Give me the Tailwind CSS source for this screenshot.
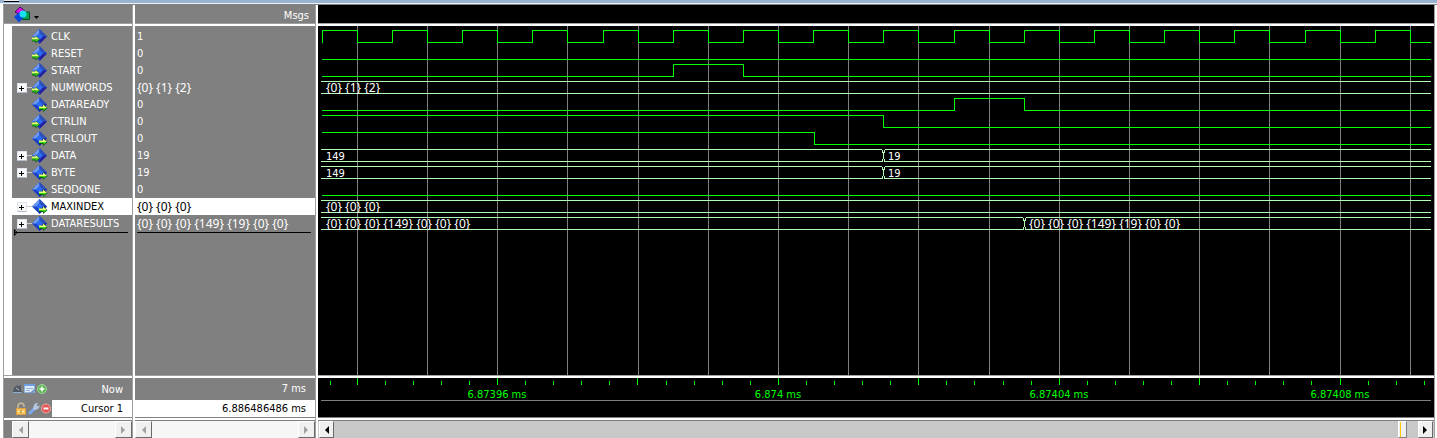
<!DOCTYPE html>
<html lang="en">
<head>
<meta charset="utf-8">
<title>Wave</title>
<script src="https://cdn.jsdelivr.net/npm/@tailwindcss/browser@4"></script>
</head>
<body class="h-screen flex flex-col overflow-hidden bg-white font-['DejaVu_Sans_Condensed','DejaVu_Sans',sans-serif] text-[11px] leading-[17px] text-white">

<svg class="hidden">
  <symbol id="in" viewBox="0 0 16 17">
    <path d="M7.500 1L15 8.500L7.500 16L0 8.500Z" fill="#1c3fc8"/><path d="M7.500 1L0 8.500L4 8.500L7.500 5Z" fill="#6f9cf5"/><path d="M7.500 1L15 8.500L11 8.500L7.500 5Z" fill="#2c50b8"/><path d="M15 8.500L7.500 16V12L11 8.500Z" fill="#2420a0"/><path d="M7.500 5L11 8.500L7.500 12L4 8.500Z" fill="#2a6cf6"/>
    <path d="M0 8.500V16H5L7.500 16Z" fill="#808080"/>
    <path d="M0 9.500H3.500V7.500L8 11.500L3.500 15.500V13.500H0Z" fill="#0a5a14"/><path d="M0 9.500H3.500V8L7.500 11.500H0Z" fill="#e4ff7c"/><path d="M0 11.500H7L4 14V12.500H0Z" fill="#3fdc10"/>
  </symbol>
  <symbol id="out" viewBox="0 0 16 17">
    <path d="M7.500 1L15 8.500L7.500 16L0 8.500Z" fill="#1c3fc8"/><path d="M7.500 1L0 8.500L4 8.500L7.500 5Z" fill="#6f9cf5"/><path d="M7.500 1L15 8.500L11 8.500L7.500 5Z" fill="#2c50b8"/><path d="M15 8.500L7.500 16V12L11 8.500Z" fill="#2420a0"/><path d="M7.500 5L11 8.500L7.500 12L4 8.500Z" fill="#2a6cf6"/>
    <path d="M7 10.500H11V8L15.500 12L11 16V14H7Z" fill="#0a5a14"/><path d="M7 10.500H11V8.500L15 12H7Z" fill="#e4ff7c"/><path d="M7 12H14.500L11.500 14.500V13H7Z" fill="#3fdc10"/>
  </symbol>
</svg>

<div class="h-[5px] shrink-0 flex flex-col">
  <div class="h-[3px] bg-[#99b4d1]"><div class="ml-1 w-[15px] h-[2px] bg-[#e8eef4] border-b border-black"></div></div>
  <div class="h-px bg-[#eef2f6]"></div>
  <div class="h-px ml-[3px] bg-[#808080]"></div>
</div>

<main class="flex-1 min-h-0 flex ml-[3px] border-l border-[#a0a0a0]">

  <!-- signal names -->
  <section class="w-[129px] shrink-0 flex flex-col bg-[#808080] border-r border-[#a0a0a0]" aria-label="Signals">
    <header class="h-[18px] shrink-0 pl-[9px]">
      <button class="flex items-center h-[18px]" aria-label="View options">
        <svg width="30" height="18" viewBox="0 0 30 18">
          <path d="M7 2L12 6L8 10L2 7Z" fill="#e010e8" stroke="#500060"/><path d="M9 7H16.500V14.500H9Z" fill="#08a050" stroke="#045028"/><path d="M6 7L11 12L6 17.500L1 12Z" fill="#0848e0"/><circle cx="10" cy="9" r="3.500" fill="#18e0f0"/><path d="M21 11H26L23.500 14Z" fill="#000"/>
        </svg>
      </button>
    </header>
    <div class="h-[3px] shrink-0 bg-white border-t border-[#a0a0a0]"></div>
    <div class="flex-1 min-h-0 border-l-8 border-white pt-[2px]">
      <ul id="names"></ul>
      <svg class="block -mt-[3px]" width="116" height="8"><path d="M2.500 .5V6.500L5 3.500Z" fill="none" stroke="#000"/><path d="M3 3.500H116" stroke="#000"/></svg>
    </div>
    <div class="h-[3px] shrink-0 bg-white border-t border-[#a0a0a0]"></div>
    <div class="h-[22px] shrink-0 flex items-center justify-between pl-2 pr-[9px]">
      <svg width="36" height="12" viewBox="0 0 36 12">
        <path d="M1 8L2.500 4L5 3L4 1.500L7 3L9 2V8L11 9V10H1Z" fill="#505a64"/><path d="M1 9.500H10" stroke="#8fb0d0"/><path d="M4 5L7 7" stroke="#aab4bd"/>
        <path d="M12.500 1.500H22.500V9.500H12.500Z" fill="#dcebfa" stroke="#8db2e0"/><path d="M12 1H23V3H12Z" fill="#6ca0e0"/><path d="M14 5.500H21M14 7.500H18" stroke="#9cb4d4"/><path d="M18 10L22 6L23 7L20 11Z" fill="#6c90c0"/>
        <circle cx="30" cy="6" r="4.500" fill="#5fb656" stroke="#a2d498"/><path d="M30 3.500V8.500M27.500 6H32.500" stroke="#fff" stroke-width="1.500"/>
      </svg>
      <span>Now</span>
    </div>
    <div class="h-[17px] shrink-0 flex">
      <svg class="ml-2 shrink-0" width="40" height="17" viewBox="0 0 40 17">
        <path d="M6 9V6A3 2.800 0 0 1 12 6V7" fill="none" stroke="#c8b89c" stroke-width="1.500"/><rect x="4.500" y="8.500" width="9" height="6" fill="#f7c860" stroke="#dca040"/><path d="M6 11.500H12" stroke="#fff0b0"/><path d="M9 10V13" stroke="#a07020"/>
        <path d="M18 13L23 8" stroke="#7caaf0" stroke-width="3" stroke-linecap="round"/><path d="M21 9L22 5L24 3L26 3L24.500 5L25.500 6.500L27.500 5L27 8L25 9.500L23 10Z" fill="#b4c8e4"/>
        <circle cx="34" cy="8.500" r="4.500" fill="#e45454" stroke="#f0a8a0"/><path d="M31.500 8.500H36.500" stroke="#fff" stroke-width="2"/>
      </svg>
      <div class="flex-1 bg-white text-black text-right pr-[9px] leading-[18px]">Cursor 1</div>
    </div>
    <div class="h-1 shrink-0 bg-white border-y border-[#808080]"></div>
    <div class="h-[17px] shrink-0 ml-2 flex justify-between bg-[#f6f6f6]">
      <button class="w-[17px] bg-[#f0f0f0] border border-t-white border-l-white border-r-[#696969] border-b-[#696969] flex items-center justify-center" aria-label="Scroll names left"><svg width="5" height="8"><path d="M5 0V8L1 4Z" fill="#a0a0a0"/></svg></button>
      <button class="w-[17px] bg-[#f0f0f0] border border-t-white border-l-white border-r-[#696969] border-b-[#696969] flex items-center justify-center" aria-label="Scroll names right"><svg width="5" height="8"><path d="M0 0V8L4 4Z" fill="#a0a0a0"/></svg></button>
    </div>
  </section>
  <div class="w-[2px] shrink-0 bg-white"></div>

  <!-- signal values -->
  <section class="w-[181px] shrink-0 flex flex-col bg-[#808080] border-r border-[#a0a0a0]" aria-label="Values">
    <header class="h-[18px] shrink-0 pt-[2px] pr-[6px] text-right">Msgs</header>
    <div class="h-[3px] shrink-0 bg-white border-t border-[#a0a0a0]"></div>
    <div class="flex-1 min-h-0 pt-[2px]">
      <ul id="values"></ul>
      <div class="ml-[2px] mr-1 h-px bg-black"></div>
    </div>
    <div class="h-[3px] shrink-0 bg-white border-t border-[#a0a0a0]"></div>
    <div class="h-[22px] shrink-0 leading-[22px] text-right pr-[9px]">7 ms</div>
    <div class="h-[17px] shrink-0 bg-white text-black text-right pr-[9px] leading-[18px]">6.886486486 ms</div>
    <div class="h-1 shrink-0 bg-white border-y border-[#808080]"></div>
    <div class="h-[17px] shrink-0 flex justify-between bg-[#f6f6f6]">
      <button class="w-[17px] bg-[#f0f0f0] border border-t-white border-l-white border-r-[#696969] border-b-[#696969] flex items-center justify-center" aria-label="Scroll values left"><svg width="5" height="8"><path d="M5 0V8L1 4Z" fill="#a0a0a0"/></svg></button>
      <button class="w-[17px] bg-[#f0f0f0] border border-t-white border-l-white border-r-[#696969] border-b-[#696969] flex items-center justify-center" aria-label="Scroll values right"><svg width="5" height="8"><path d="M0 0V8L4 4Z" fill="#a0a0a0"/></svg></button>
    </div>
  </section>
  <div class="w-[2px] shrink-0 bg-white"></div>

  <!-- waveforms -->
  <section class="flex-1 min-w-0 flex flex-col bg-black border-r border-[#a0a0a0]" aria-label="Waveforms">
    <div class="h-[18px] shrink-0"></div>
    <div class="h-[3px] shrink-0 bg-white border-t border-[#a0a0a0]"></div>
    <div class="flex-1 min-h-0 overflow-hidden"><svg id="wave" class="block w-full h-full" shape-rendering="crispEdges"></svg></div>
    <div class="h-[3px] shrink-0 bg-white border-t border-[#a0a0a0]"></div>
    <div class="h-[39px] shrink-0"><svg id="time" class="block w-full h-full" shape-rendering="crispEdges"></svg></div>
    <div class="h-1 shrink-0 bg-white border-y border-[#808080]"></div>
    <div class="h-[17px] shrink-0 flex bg-[#c8c8c8] pl-px pr-px">
      <button class="w-[15px] bg-[#f0f0f0] border border-t-white border-l-white border-r-[#696969] border-b-[#696969] flex items-center justify-center" aria-label="Scroll waves left"><svg width="5" height="8"><path d="M5 0V8L1 4Z" fill="#000"/></svg></button>
      <div class="flex-1"></div>
      <button class="w-[9px] mr-[11px] bg-[#f0f0f0] border border-t-white border-l-white border-r-[#808080] border-b-[#808080] flex pl-px" aria-label="Scroll position"><span class="w-px h-full bg-[#ffc800]"></span></button>
      <button class="w-[15px] bg-[#f0f0f0] border border-t-white border-l-white border-r-[#696969] border-b-[#696969] flex items-center justify-center" aria-label="Scroll waves right"><svg width="5" height="8"><path d="M0 0V8L4 4Z" fill="#000"/></svg></button>
    </div>
  </section>
  <div class="w-[2px] shrink-0 bg-white"></div>
</main>

<script>
// x positions are relative to the waveform pane
const clk = [];
for (let k = 0; k < 16; k++) { clk.push([Math.floor(4.3 + 70.2 * k), 1]); clk.push([Math.floor(39.2 + 70.2 * k), 0]); }
const signals = [
  { n: 'CLK', v: '1', io: 'in', w: clk },
  { n: 'RESET', v: '0', io: 'in', w: [[4, 0]] },
  { n: 'START', v: '0', io: 'in', w: [[4, 0], [355, 1], [425, 0]] },
  { n: 'NUMWORDS', v: '{0} {1} {2}', io: 'in', b: [[3, '{0} {1} {2}']] },
  { n: 'DATAREADY', v: '0', io: 'out', w: [[4, 0], [636, 1], [706, 0]] },
  { n: 'CTRLIN', v: '0', io: 'in', w: [[4, 1], [565, 0]] },
  { n: 'CTRLOUT', v: '0', io: 'out', w: [[4, 1], [496, 0]] },
  { n: 'DATA', v: '19', io: 'in', b: [[3, '149'], [565, '19']] },
  { n: 'BYTE', v: '19', io: 'out', b: [[3, '149'], [565, '19']] },
  { n: 'SEQDONE', v: '0', io: 'out', w: [[4, 0]] },
  { n: 'MAXINDEX', v: '{0} {0} {0}', io: 'out', b: [[3, '{0} {0} {0}']], sel: true },
  { n: 'DATARESULTS', v: '{0} {0} {0} {149} {19} {0} {0}', io: 'out', b: [[3, '{0} {0} {0} {149} {0} {0} {0}'], [706, '{0} {0} {0} {149} {19} {0} {0}']] }
];
const END = 1113;
const listFont = t => t.startsWith('{') ? "font-['Noto_Sans',sans-serif] text-[12px]" : '';
let names = '', values = '', g = '';
for (let k = 0; k < 16; k++) { const x = Math.floor(39.2 + 70.2 * k) + .5; g += `<path d="M${x} 0V2000" stroke="#808080"/>`; }
signals.forEach((s, i) => {
  const expand = s.b
    ? '<button class="ml-[5px] w-[10px] h-[10px] rounded-[1px] bg-[#f8f8f8] border border-[#dfe6f0] border-b-[#b4bccc] flex items-center justify-center" aria-label="Expand ' + s.n + '"><svg width="6" height="6" shape-rendering="crispEdges"><path d="M0 3.500H5M2.500 1V6" stroke="#000"/></svg></button><span class="w-[5px] h-px bg-[#c8c8c8]"></span>'
    : '<span class="ml-[5px] w-[15px]"></span>';
  names += `<li class="h-[17px] flex items-center ${s.sel ? 'bg-white text-black' : ''}">${expand}<svg class="w-4 h-[17px]"><use href="#${s.io}"/></svg><span class="ml-[3px]">${s.n}</span></li>`;
  values += `<li class="h-[17px] leading-[17px] pl-[2px] whitespace-nowrap ${s.sel ? 'bg-white text-black' : ''}"><span class="block leading-[17px] ${listFont(s.v)}">${s.v}</span></li>`;
  const hi = 4.5 + 17 * i, lo = hi + 12;
  if (s.w) {
    let d = '';
    s.w.forEach(([x, l], j) => {
      const y = l ? hi : lo, nx = j + 1 < s.w.length ? s.w[j + 1][0] + .5 : END;
      if (s.n === 'CLK' && j === 0) d += `M${x + .5} ${lo}V${hi}`;
      d += `${d ? 'V' + y : `M${x} ${y}`}H${nx}`;
    });
    g += `<path d="${d}" fill="none" stroke="#00ff00"/>`;
  } else {
    s.b.forEach(([x, t], j) => {
      const nx = j + 1 < s.b.length ? s.b[j + 1][0] - 1 : END, a = j ? x + 2 : x;
      g += `<path d="M${a} ${hi}H${nx}M${a} ${lo}H${nx}" stroke="#b4ffb4"/>`;
      if (j) g += `<path d="M${x - .5} ${hi}V${hi + 3}M${x + .5} ${hi + 2.5}V${lo - 2.5}M${x - .5} ${lo - 3}V${lo}M${x + 1.5} ${hi}V${hi + 3}M${x + 1.5} ${lo - 3}V${lo}" stroke="#b4ffb4"/>`;
      g += `<text class="${listFont(t)}" x="${x + 5}" y="${hi + 10.5}" fill="#fff">${t}</text>`;
    });
  }
});
document.getElementById('names').innerHTML = names;
document.getElementById('values').innerHTML = values;
document.getElementById('wave').innerHTML = g;
let t = '<path d="M3 22.500H1113" stroke="#808080"/>';
for (let k = -1; k < 39; k++) {
  const x = (k < 0 ? 12 : Math.floor(39.2 + 28.08 * k)) + .5, major = k % 5 === 0;
  t += `<path d="M${x} ${major ? 0 : 3}V7" stroke="#00ff00"/>`;
}
[[179, '6.87396 ms'], [460, '6.874 ms'], [741, '6.87404 ms'], [1022, '6.87408 ms']].forEach(([x, s]) => {
  t += `<text x="${x}" y="20" text-anchor="middle" fill="#00ff00">${s}</text>`;
});
document.getElementById('time').innerHTML = t;
</script>
</body>
</html>
